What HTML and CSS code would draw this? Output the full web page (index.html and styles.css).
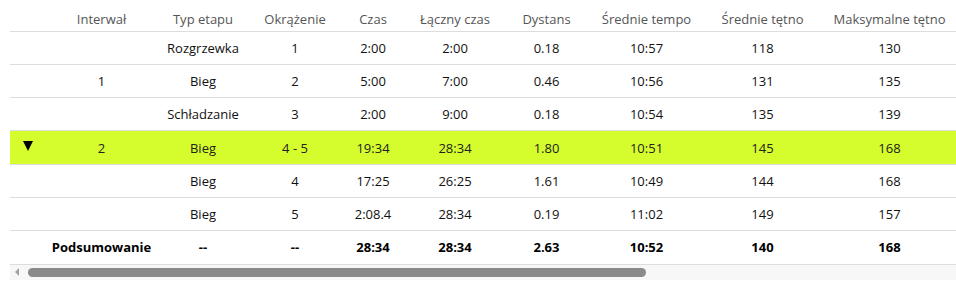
FILE: index.html
```html
<!DOCTYPE html>
<html lang="pl">
<head>
<meta charset="utf-8">
<title>Interwały</title>
<link rel="stylesheet" href="styles.css">
</head>
<body>
<div class="wrap">
  <div class="scroller">
    <table class="laps">
      <colgroup>
        <col class="c0"><col class="c1"><col class="c2"><col class="c3"><col class="c4">
        <col class="c5"><col class="c6"><col class="c7"><col class="c8"><col class="c9">
      </colgroup>
      <thead>
        <tr>
          <th></th><th>Interwał</th><th>Typ etapu</th><th>Okrążenie</th><th>Czas</th>
          <th>Łączny czas</th><th>Dystans</th><th>Średnie tempo</th><th>Średnie tętno</th><th>Maksymalne tętno</th>
        </tr>
      </thead>
      <tbody>
        <tr><td></td><td></td><td>Rozgrzewka</td><td>1</td><td>2:00</td><td>2:00</td><td>0.18</td><td>10:57</td><td>118</td><td>130</td></tr>
        <tr><td></td><td>1</td><td>Bieg</td><td>2</td><td>5:00</td><td>7:00</td><td>0.46</td><td>10:56</td><td>131</td><td>135</td></tr>
        <tr><td></td><td></td><td>Schładzanie</td><td>3</td><td>2:00</td><td>9:00</td><td>0.18</td><td>10:54</td><td>135</td><td>139</td></tr>
        <tr class="active"><td><span class="caret"></span></td><td>2</td><td>Bieg</td><td>4 - 5</td><td>19:34</td><td>28:34</td><td>1.80</td><td>10:51</td><td>145</td><td>168</td></tr>
        <tr><td></td><td></td><td>Bieg</td><td>4</td><td>17:25</td><td>26:25</td><td>1.61</td><td>10:49</td><td>144</td><td>168</td></tr>
        <tr><td></td><td></td><td>Bieg</td><td>5</td><td>2:08.4</td><td>28:34</td><td>0.19</td><td>11:02</td><td>149</td><td>157</td></tr>
        <tr class="summary"><td></td><td>Podsumowanie</td><td>--</td><td>--</td><td>28:34</td><td>28:34</td><td>2.63</td><td>10:52</td><td>140</td><td>168</td></tr>
      </tbody>
    </table>
  </div>
  <div class="scrollbar">
    <span class="sb-arrow"></span>
    <span class="sb-thumb"></span>
  </div>
</div>
</body>
</html>
```
FILE: styles.css
```css
html, body {
  margin: 0;
  padding: 0;
  background: #fff;
}
body {
  font-family: "Open Sans", "Liberation Sans", sans-serif;
  font-size: 13px;
  color: #222;
  overflow: hidden;
}
.wrap {
  padding-left: 10px;
  width: 946px;
  overflow: hidden;
}
.scroller {
  overflow: hidden;
}
.laps {
  border-collapse: collapse;
  table-layout: fixed;
  width: 949px;
}
.c0 { width: 36px; }
.c1 { width: 111px; }
.c2 { width: 92px; }
.c3 { width: 92px; }
.c4 { width: 64px; }
.c5 { width: 100px; }
.c6 { width: 83px; }
.c7 { width: 117px; }
.c8 { width: 115px; }
.c9 { width: 139px; }

.laps th {
  height: 31px;
  padding: 0 0 3px;
  box-sizing: border-box;
  vertical-align: bottom;
  font-weight: normal;
  color: #555;
  text-align: center;
  white-space: nowrap;
  border-bottom: 1px solid #ddd;
}
.laps td {
  height: 33.3px;
  padding: 0;
  box-sizing: border-box;
  text-align: center;
  vertical-align: middle;
  white-space: nowrap;
  border-bottom: 1px solid #ddd;
  color: #111;
}
.laps tr.active td {
  background: #d5fd2e;
  color: #222;
}
.laps tr.summary td {
  font-weight: bold;
  color: #000;
}
.caret {
  display: inline-block;
  width: 0;
  height: 0;
  border-left: 5px solid transparent;
  border-right: 5px solid transparent;
  border-top: 10px solid #000;
  vertical-align: middle;
  margin-left: 0;
  position: relative;
  top: -3px;
}
.scrollbar {
  height: 15px;
  background: #f7f7f7;
  display: flex;
  align-items: center;
}
.sb-arrow {
  width: 0;
  height: 0;
  border-top: 4px solid transparent;
  border-bottom: 4px solid transparent;
  border-right: 4px solid #a3a3a3;
  margin-left: 5px;
}
.sb-thumb {
  width: 618px;
  height: 9px;
  border-radius: 5px;
  background: #8a8a8a;
  margin-left: 9px;
}
```
